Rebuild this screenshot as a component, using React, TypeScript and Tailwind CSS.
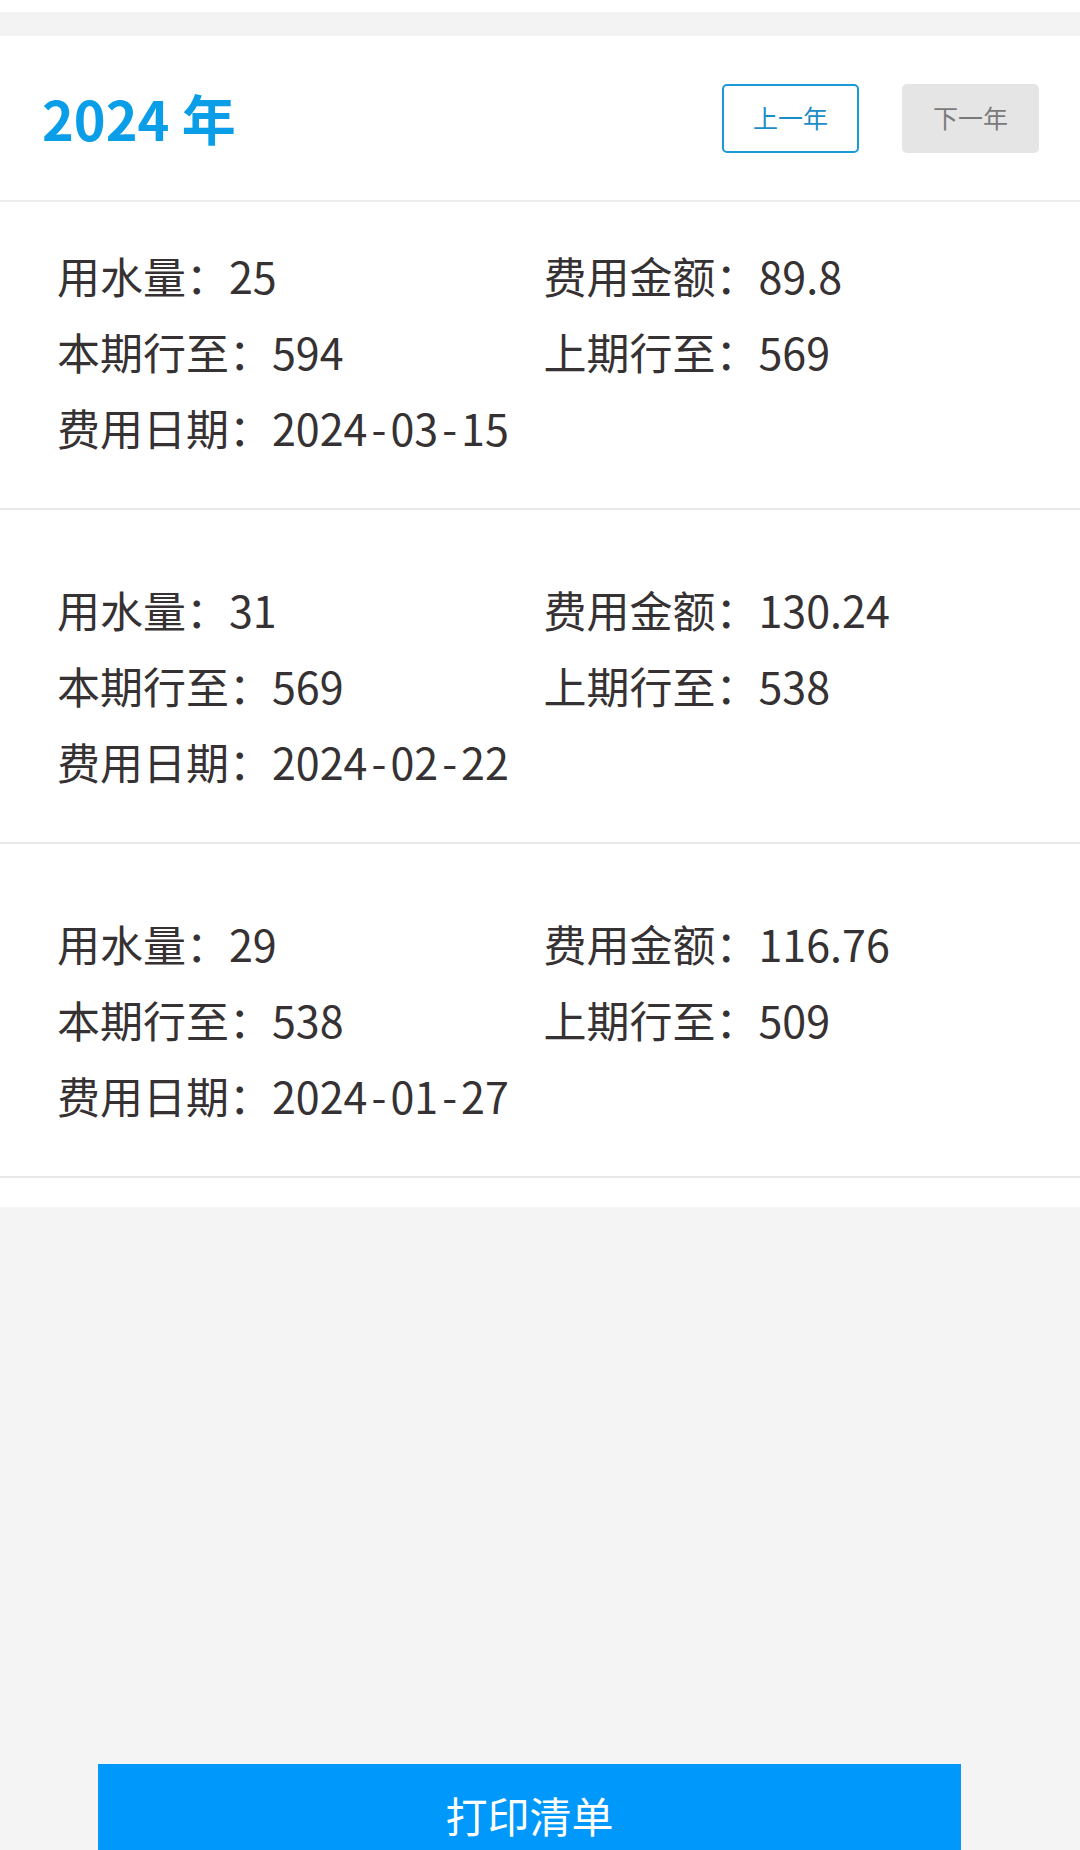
import React from 'react';

interface Bill {
  usage: string;
  amount: string;
  current: string;
  previous: string;
  date: string;
}

const bills: Bill[] = [
  { usage: '25', amount: '89.8', current: '594', previous: '569', date: '2024-03-15' },
  { usage: '31', amount: '130.24', current: '569', previous: '538', date: '2024-02-22' },
  { usage: '29', amount: '116.76', current: '538', previous: '509', date: '2024-01-27' },
];

// hyphens in the reference font are wider, give them a little room
const DateText: React.FC<{ value: string }> = ({ value }) => {
  const parts = value.split('-');
  return (
    <span>
      {parts.map((p, i) => (
        <React.Fragment key={i}>
          {i > 0 && <span className="px-[4px]">-</span>}
          {p}
        </React.Fragment>
      ))}
    </span>
  );
};

const BillRow: React.FC<{ bill: Bill; first: boolean }> = ({ bill, first }) => {
  return (
    <div
      className={`${first ? 'pt-[35px]' : 'pt-[61px]'} shrink-0 pb-[43px] pl-[57px] pr-[50px] border-b-2 border-[#e8e8e8] text-[43px] leading-[76px] text-[#363132]`}
    >
      <div className="grid grid-cols-2">
        <div>用水量：{bill.usage}</div>
        <div>费用金额：{bill.amount}</div>
        <div>本期行至：{bill.current}</div>
        <div>上期行至：{bill.previous}</div>
        <div className="col-span-2">
          费用日期：<DateText value={bill.date} />
        </div>
      </div>
    </div>
  );
};

export default function App() {
  return (
    <div
      className="w-[1080px] h-[1850px] overflow-hidden bg-[#f4f4f4] flex flex-col"
      style={{ fontFamily: '"Noto Sans CJK SC", "Noto Sans", sans-serif' }}
    >
      <div className="h-[12px] shrink-0 bg-white" />
      <div className="h-[24px] shrink-0 bg-[#f3f3f3]" />

      <div className="bg-white pb-[29px] shrink-0">
        <div className="h-[166px] flex items-center justify-between pl-[42px] pr-[41px] border-b-2 border-[#ececec]">
          <h1 className="text-[54px] font-bold text-[#0a9ee8] leading-none">2024 年</h1>
          <div className="flex items-center gap-[43px]">
            <button className="w-[137px] h-[69px] rounded-[5px] border-2 border-[#1a9bd7] text-[#1a8cc8] text-[25px] bg-white">
              上一年
            </button>
            <button className="w-[137px] h-[69px] rounded-[5px] bg-[#e5e5e5] text-[#7a7a7a] text-[25px]">
              下一年
            </button>
          </div>
        </div>

        {bills.map((b, i) => (
          <BillRow key={b.date} bill={b} first={i === 0} />
        ))}
      </div>

      <div className="mt-[557px] ml-[98px] w-[863px] h-[102px] shrink-0 bg-[#0098fa] flex items-center justify-center">
        <span className="text-white text-[42px] leading-none">打印清单</span>
      </div>
    </div>
  );
}
